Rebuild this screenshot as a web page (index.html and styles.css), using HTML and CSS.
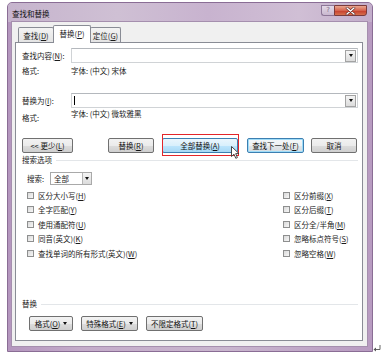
FILE: index.html
```html
<!DOCTYPE html>
<html>
<head>
<meta charset="utf-8">
<title>查找和替换</title>
<link rel="stylesheet" href="styles.css">
</head>
<body>
<div class="page">
  <div class="window">
    <div class="titlebar">
      <span class="title">查找和替换</span>
      <div class="caption">
        <span class="cap-help">?</span>
        <span class="cap-close">
          <svg width="11" height="8" viewBox="0 0 11 8"><path d="M2 1 L9 7 M9 1 L2 7" stroke="#5a2a2a" stroke-width="2.6" stroke-linecap="round"/><path d="M2 1 L9 7 M9 1 L2 7" stroke="#ffffff" stroke-width="1.4" stroke-linecap="round"/></svg>
        </span>
      </div>
    </div>
    <div class="client">
      <div class="tabs">
        <div class="tab">查找(<u>D</u>)</div>
        <div class="tab active">替换(<u>P</u>)</div>
        <div class="tab">定位(<u>G</u>)</div>
      </div>
      <div class="panel">
        <div class="field-row r1">
          <span class="label">查找内容(<u>N</u>):</span>
          <div class="combo">
            <span class="combo-text"></span>
            <span class="combo-btn"><i class="tri"></i></span>
          </div>
        </div>
        <div class="fmt-row r2">
          <span class="label">格式:</span>
          <span class="fmt-value">字体: (中文) 宋体</span>
        </div>
        <div class="field-row r3">
          <span class="label">替换为(<u>I</u>):</span>
          <div class="combo">
            <span class="combo-text"><i class="caret"></i></span>
            <span class="combo-btn"><i class="tri"></i></span>
          </div>
        </div>
        <div class="fmt-row r4">
          <span class="label lower">格式:</span>
          <span class="fmt-value">字体: (中文) 微软雅黑</span>
        </div>
        <div class="btn-row">
          <button class="btn b-less">&lt;&lt; 更少(<u>L</u>)</button>
          <button class="btn b-rep">替换(<u>R</u>)</button>
          <div class="hl-wrap">
            <button class="btn hover b-all">全部替换(<u>A</u>)</button>
            <span class="redbox"></span>
            <svg class="cursor" width="9" height="13" viewBox="0 0 9 13"><path d="M0.5 0.5 L0.5 10.5 L3 8.2 L4.8 12.3 L6.4 11.6 L4.7 7.6 L8 7.6 Z" fill="#ffffff" stroke="#333333" stroke-width="0.9" stroke-linejoin="round"/></svg>
          </div>
          <button class="btn focus b-next">查找下一处(<u>F</u>)</button>
          <button class="btn b-cancel">取消</button>
        </div>
        <div class="group-head sh">
          <span class="group-title">搜索选项</span>
          <span class="group-line"></span>
        </div>
        <div class="search-row">
          <span class="search-label">搜索:</span>
          <div class="select">
            <span class="select-text">全部</span>
            <span class="select-btn"><i class="tri"></i></span>
          </div>
        </div>
        <div class="checks">
          <div class="check"><i class="box"></i><span>区分大小写(<u>H</u>)</span></div>
          <div class="check"><i class="box"></i><span>区分前缀(<u>X</u>)</span></div>
          <div class="check"><i class="box"></i><span>全字匹配(<u>Y</u>)</span></div>
          <div class="check"><i class="box"></i><span>区分后缀(<u>T</u>)</span></div>
          <div class="check"><i class="box"></i><span>使用通配符(<u>U</u>)</span></div>
          <div class="check"><i class="box"></i><span>区分全/半角(<u>M</u>)</span></div>
          <div class="check"><i class="box"></i><span>同音(英文)(<u>K</u>)</span></div>
          <div class="check"><i class="box"></i><span>忽略标点符号(<u>S</u>)</span></div>
          <div class="check"><i class="box"></i><span>查找单词的所有形式(英文)(<u>W</u>)</span></div>
          <div class="check"><i class="box"></i><span>忽略空格(<u>W</u>)</span></div>
        </div>
        <div class="group-head rh">
          <span class="group-title">替换</span>
          <span class="group-line"></span>
        </div>
        <div class="fmt-btns">
          <button class="btn f1">格式(<u>O</u>) <i class="tri"></i></button>
          <button class="btn f2">特殊格式(<u>E</u>) <i class="tri"></i></button>
          <button class="btn f3">不限定格式(<u>T</u>)</button>
        </div>
      </div>
    </div>
  </div>
  <svg class="para" width="8" height="7" viewBox="0 0 8 7"><path d="M7 0 L7 4.5 L1.5 4.5" fill="none" stroke="#555" stroke-width="0.9"/><path d="M0.5 4.5 L3 2.5 L3 6.5 Z" fill="#555"/></svg>
</div>
</body>
</html>
```
FILE: styles.css
```css
* { box-sizing: border-box; }
html, body { margin: 0; padding: 0; }
body {
  width: 381px;
  height: 357px;
  overflow: hidden;
  background: #ffffff;
  font-family: "Noto Sans CJK SC", "Noto Sans", sans-serif;
  font-size: 7.5px;
  color: #1b1b1b;
}
u { text-decoration: underline; text-underline-offset: 1px; }

.page {
  display: flex;
  align-items: flex-end;
  height: 357px;
  padding: 2px 0 5px 7px;
}

.window {
  width: 366px;
  height: 350px;
  display: flex;
  flex-direction: column;
  border: 1px solid #8a6d95;
  border-radius: 5px 5px 0 0;
  background: linear-gradient(to right, #b496be 0%, #c4acca 20%, #c9b6ce 60%, #b89bc1 100%);
  padding: 0 5px 5px 4px;
}

.titlebar {
  height: 19px;
  display: flex;
  align-items: center;
  justify-content: space-between;
  background: linear-gradient(to right, #c6b4cd 0%, #cfc0d4 30%, #c8b3cf 55%, #d0bfd5 80%, #c3aecb 100%);
  margin: 0 -5px 0 -4px;
  padding: 0 5px 0 4px;
  border-radius: 4px 4px 0 0;
}
.title { color: #111; padding-top: 1px; }
.caption { display: flex; align-self: flex-start; margin-top: 2px; }
.cap-help {
  width: 13px;
  height: 11px;
  border: 1px solid #8d7697;
  border-right: none;
  border-radius: 0 0 0 3px;
  background: linear-gradient(#e3d8e7, #c9b8cf);
  color: #7c6a84;
  font-family: "DejaVu Sans", sans-serif;
  font-size: 7px;
  line-height: 9px;
  text-align: center;
}
.cap-close {
  width: 33px;
  height: 11px;
  border: 1px solid #7b3b3b;
  border-radius: 0 0 3px 0;
  background: linear-gradient(#e9a690 0%, #d6644f 50%, #c7402e 55%, #d5704e 100%);
  display: flex;
  align-items: center;
  justify-content: center;
}

.client {
  flex: 1;
  display: flex;
  flex-direction: column;
  background: #f0f0f0;
  box-shadow: 0 0 0 1px #a58fae;
  padding: 3px 4px 5px 3px;
}

.tabs {
  height: 17px;
  display: flex;
  align-items: flex-end;
  padding-left: 3px;
}
.tab {
  height: 15px;
  border: 1px solid #898c95;
  border-bottom: none;
  border-radius: 2px 2px 0 0;
  background: linear-gradient(#f3f3f3, #e4e4e4);
  display: flex;
  align-items: center;
  justify-content: center;
  width: 36px;
  margin-left: -1px;
}
.tab:first-child { margin-left: 0; }
.tab.active {
  width: 38px;
  height: 18px;
  margin-bottom: -1px;
  background: #ffffff;
  position: relative;
  z-index: 1;
  padding-bottom: 2px;
}
.tab:last-child { width: 31px; }

.panel {
  flex: 1;
  display: flex;
  flex-direction: column;
  background: #ffffff;
  border: 1px solid #898c95;
  padding: 0 4px 9px 6px;
}

.field-row { display: flex; align-items: center; height: 15px; }
.r1 { margin-top: 5px; }
.r3 { margin-top: 17px; }
.label { width: 49px; flex: none; line-height: 10px; }
.combo {
  flex: 1;
  height: 15px;
  display: flex;
  align-items: center;
  border: 1px solid #d0d3d6;
  border-top-color: #b4b8bd;
  background: #fff;
}
.combo-text { flex: 1; height: 100%; display: flex; align-items: center; padding-left: 2px; }
.caret { width: 1px; height: 9px; background: #000; }
.combo-btn {
  width: 11px;
  height: 12px;
  margin-right: 1px;
  border: 1px solid #a3a3a3;
  background: linear-gradient(#f5f5f5, #dcdcdc);
  display: flex;
  align-items: center;
  justify-content: center;
}
.tri {
  display: inline-block;
  width: 0;
  height: 0;
  border-left: 2.5px solid transparent;
  border-right: 2.5px solid transparent;
  border-top: 3px solid #111;
}

.fmt-row { display: flex; align-items: flex-start; }
.r2 { margin-top: 3px; height: 10px; }
.r4 { margin-top: 1px; height: 14px; }
.fmt-value { line-height: 10px; }
.label.lower { margin-top: 4px; }

.btn {
  height: 15px;
  padding: 0;
  margin: 0;
  font: inherit;
  color: #111;
  border: 1px solid #707070;
  border-radius: 2px;
  background: linear-gradient(#f2f2f2 0%, #ebebeb 50%, #dddddd 50%, #cfcfcf 100%);
  display: flex;
  align-items: center;
  justify-content: center;
  line-height: 10px;
  white-space: nowrap;
}
.btn.hover {
  border-color: #3c7fb1;
  background: linear-gradient(#eaf6fd 0%, #d9f0fc 50%, #bee6fd 50%, #a7d9f5 100%);
}
.btn.focus {
  border-color: #3c7fb1;
  box-shadow: inset 0 0 0 1px #9fdcf8;
  background: linear-gradient(#f4f8fa 0%, #eef2f4 50%, #e2e7ea 50%, #d6dce0 100%);
}

.btn-row { display: flex; margin-top: 15px; height: 15px; }
.b-less { width: 51px; }
.b-rep { width: 46px; margin-left: 35px; }
.hl-wrap { position: relative; margin-left: 8px; }
.b-all { width: 76px; }
.redbox {
  position: absolute;
  left: 0;
  top: -4px;
  right: -1px;
  bottom: -3px;
  border: 1.5px solid #e3262a;
}
.cursor { position: absolute; left: 69px; top: 8px; }
.b-next { width: 57px; margin-left: 9px; }
.b-cancel { width: 46px; margin-left: 7px; }

.group-head { display: flex; align-items: center; height: 10px; }
.sh { margin-top: 2px; }
.group-title { line-height: 10px; }
.group-line { flex: 1; height: 1px; background: #e3e6e9; margin-left: 4px; }

.search-row { display: flex; align-items: center; margin-top: 7px; height: 13px; padding-left: 5px; }
.search-label { width: 23px; }
.select {
  width: 42px;
  height: 13px;
  display: flex;
  align-items: center;
  border: 1px solid #a9a9a9;
  background: #fff;
}
.select-text { flex: 1; padding-left: 3px; line-height: 10px; }
.select-btn {
  width: 9px;
  height: 11px;
  border-left: 1px solid #b5b5b5;
  background: linear-gradient(#f4f4f4, #dcdcdc);
  display: flex;
  align-items: center;
  justify-content: center;
}

.checks {
  display: grid;
  grid-template-columns: 256px 1fr;
  grid-auto-rows: 14.5px;
  margin-top: 3px;
  padding-left: 5px;
}
.check { display: flex; align-items: center; }
.box {
  width: 7px;
  height: 7px;
  border: 1px solid #8e8f8f;
  background: linear-gradient(135deg, #d9d9d9, #f7f7f7);
  margin-right: 4px;
  flex: none;
}

.rh { margin-top: auto; }
.fmt-btns { display: flex; margin-top: 7px; padding-left: 7px; }
.fmt-btns .btn { margin-right: 8px; }
.fmt-btns .tri { margin-left: 3px; }
.f1 { width: 44px; }
.f2 { width: 57px; }
.f3 { width: 57px; }

.para { margin-left: 0; margin-bottom: 0; }
```
